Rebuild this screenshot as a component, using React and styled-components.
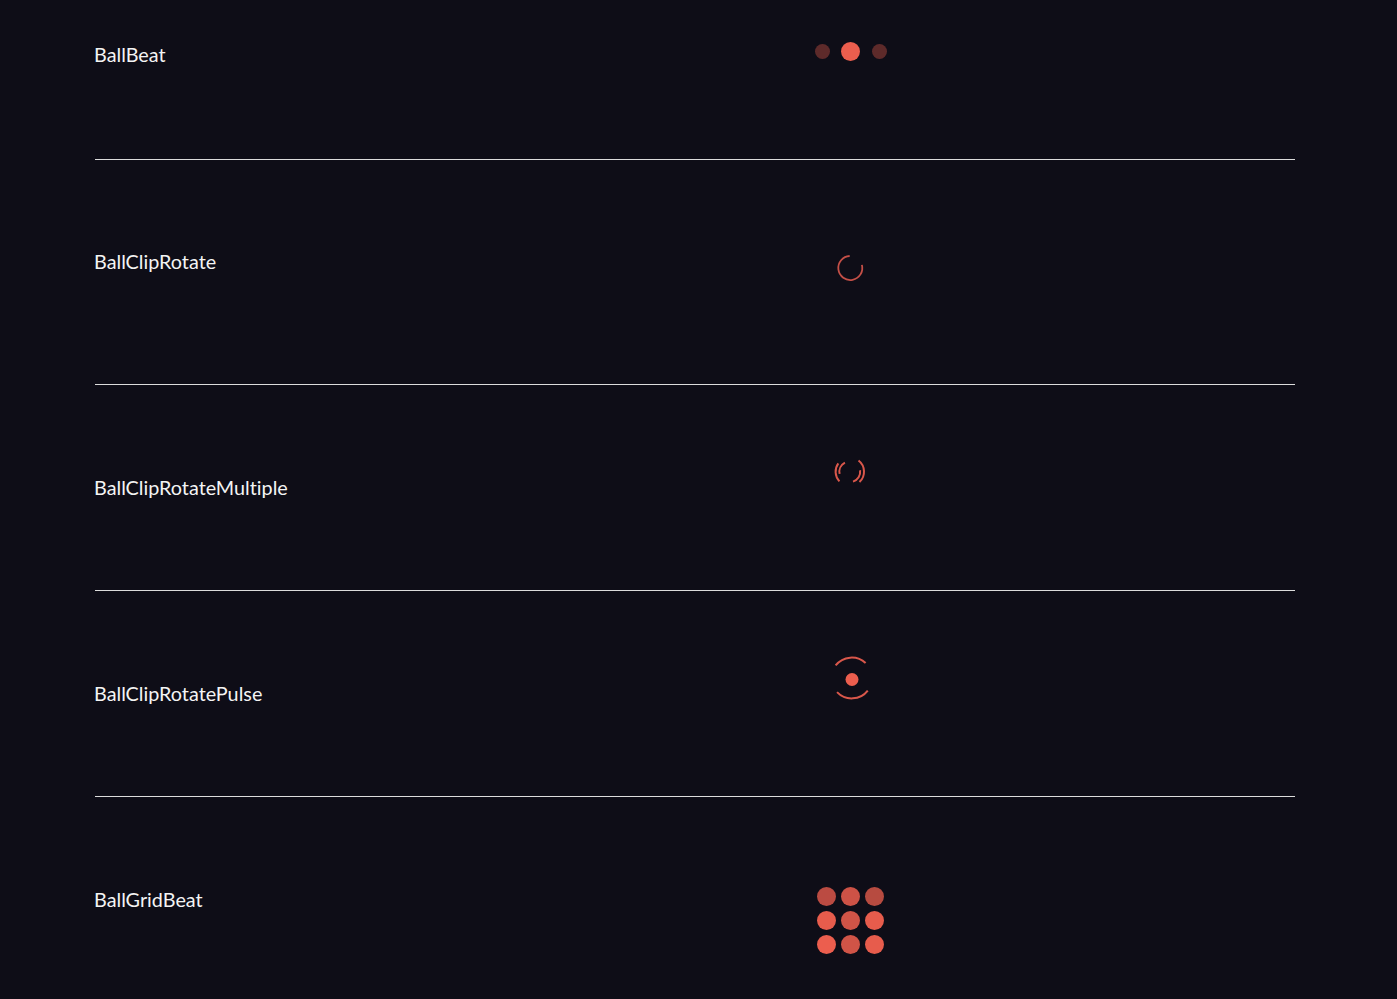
import React from 'react'
import styled, { createGlobalStyle } from 'styled-components'

const GlobalStyle = createGlobalStyle`
  html, body {
    margin: 0;
    height: 100%;
    overflow: hidden;
    background: #0e0d17;
  }
`

const CORAL = '#ec5e4e'

// clockwise angles from 12 o'clock
function arc(cx, cy, r, from, to) {
  const point = (deg) => {
    const rad = (deg * Math.PI) / 180
    return `${(cx + r * Math.sin(rad)).toFixed(2)} ${(cy - r * Math.cos(rad)).toFixed(2)}`
  }
  const large = to - from > 180 ? 1 : 0
  return `M${point(from)} A${r} ${r} 0 ${large} 1 ${point(to)}`
}

function BallBeat() {
  return (
    <BeatRow>
      <BeatDot $size={15} $opacity={0.36} />
      <BeatDot $size={19} $opacity={1} />
      <BeatDot $size={15} $opacity={0.36} />
    </BeatRow>
  )
}

function BallClipRotate() {
  return (
    <svg width="30" height="30" viewBox="0 0 30 30" fill="none">
      <path d={arc(15.3, 15, 12, 75, 357)} stroke="#c44f47" strokeWidth="1.8" />
    </svg>
  )
}

function BallClipRotateMultiple() {
  return (
    <svg width="36" height="36" viewBox="0 0 36 36" fill="none" stroke="#d9574b" strokeWidth="2">
      <path d={arc(17.8, 17.7, 14.2, 227, 306)} />
      <path d={arc(17.8, 17.7, 14.2, 38, 137)} />
      <path d={arc(17.8, 17.7, 10.4, 258, 332)} />
      <path d={arc(17.8, 17.7, 10.4, 82, 162)} />
    </svg>
  )
}

function BallClipRotatePulse() {
  return (
    <svg width="46" height="46" viewBox="0 0 46 46" fill="none">
      <g stroke="#d9574b" strokeWidth="2">
        <path d={arc(24.7, 23, 20.4, 308, 403)} />
        <path d={arc(24.7, 23, 20.4, 128, 226)} />
      </g>
      <circle cx="25" cy="24.5" r="6.5" fill={CORAL} />
    </svg>
  )
}

const gridOpacity = [0.78, 0.86, 0.76, 0.98, 0.88, 0.98, 1, 0.88, 0.98]

function BallGridBeat() {
  return (
    <BeatGrid>
      {gridOpacity.map((opacity, i) => (
        <GridDot key={i} $opacity={opacity} />
      ))}
    </BeatGrid>
  )
}

const loaders = [
  { name: 'BallBeat', labelTop: 88, offset: 88, height: 206, Loader: BallBeat },
  { name: 'BallClipRotate', labelTop: 89, offset: 93, height: 225, Loader: BallClipRotate },
  { name: 'BallClipRotateMultiple', labelTop: 90, offset: 69, height: 206, Loader: BallClipRotateMultiple },
  { name: 'BallClipRotatePulse', labelTop: 90, offset: 64, height: 206, Loader: BallClipRotatePulse },
  { name: 'BallGridBeat', labelTop: 90, offset: 90, height: 206, Loader: BallGridBeat },
]

export default function App() {
  return (
    <>
      <GlobalStyle />
      <Page>
        {loaders.map(({ name, labelTop, offset, height, Loader }) => (
          <Row key={name} $height={height}>
            <Label $top={labelTop}>{name}</Label>
            <LoaderCell $offset={offset}>
              <Loader />
            </LoaderCell>
          </Row>
        ))}
      </Page>
    </>
  )
}

const Page = styled.div`
  width: 1200px;
  margin: -46px 0 0 95px;
  color: #f4f4f4;
  font-family: Lato, "Open Sans", sans-serif;
`

const Row = styled.div`
  box-sizing: border-box;
  display: grid;
  grid-template-columns: 600px 310px;
  height: ${(props) => props.$height}px;
  border-bottom: 1px solid #dcdcdc;

  &:last-child {
    border-bottom: none;
  }
`

const Label = styled.div`
  padding-top: ${(props) => props.$top}px;
  margin-left: -1px;
  font-size: 19.8px;
  line-height: 24px;
  font-variant-ligatures: none;
`

const LoaderCell = styled.div`
  display: flex;
  justify-content: center;
  align-items: flex-start;
  padding-top: ${(props) => props.$offset}px;
`

const BeatRow = styled.div`
  display: flex;
  align-items: center;
  gap: 11.5px;
  margin-left: 1px;
`

const BeatDot = styled.div`
  width: ${(props) => props.$size}px;
  height: ${(props) => props.$size}px;
  border-radius: 50%;
  background: ${CORAL};
  opacity: ${(props) => props.$opacity};
`

const BeatGrid = styled.div`
  display: grid;
  grid-template-columns: repeat(3, 19px);
  gap: 5px;
  margin-left: 1px;
`

const GridDot = styled.div`
  width: 19px;
  height: 19px;
  border-radius: 50%;
  background: ${CORAL};
  opacity: ${(props) => props.$opacity};
`
